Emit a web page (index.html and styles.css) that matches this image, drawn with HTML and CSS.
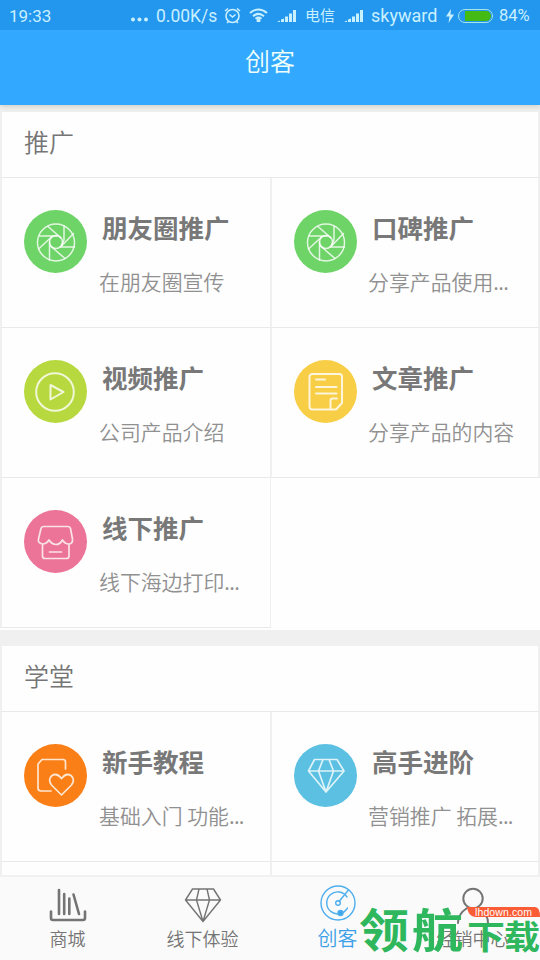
FILE: index.html
```html
<!DOCTYPE html>
<html lang="zh-CN">
<head>
<meta charset="utf-8">
<title>创客</title>
<link rel="stylesheet" href="styles.css">
</head>
<body>
<svg class="defs" width="0" height="0">
  <symbol id="aperture" viewBox="0 0 63 63">
    <circle cx="32" cy="32.500" r="18.500"/><circle cx="32" cy="32" r="6.500"/>
    <path d="M24 16.500 36.500 27.500M40 16V30L37.500 35M49.500 23.500 37 36.500M50.500 37H36M41 48.500 26.500 36M25.500 50V32M14.500 39 28 26.500M15.500 26H33"/>
  </symbol>
  <symbol id="signal" viewBox="0 0 20 14">
    <path d="M0 13 3 11.500V13ZM4 13V10.500L7 9.500V13ZM8 13V7.500H11V13ZM12 13V4.500H15V13ZM16 13V1H19V13Z"/>
  </symbol>
</svg>
<div class="screen">
  <header class="status">
    <span class="time">19:33</span>
    <svg class="dots" viewBox="0 0 17 5"><circle cx="2" cy="2.500" r="2"/><circle cx="8.500" cy="2.500" r="2"/><circle cx="15" cy="2.500" r="2"/></svg>
    <span class="speed">0.00K/s</span>
    <svg class="alarm" viewBox="0 0 17 17"><circle cx="8.500" cy="9" r="6.500"/><path d="M5.500 7.500 8.500 10 11.500 7.500M1 4 4 1.500M16 4 13 1.500M3 16 4.500 14.500M14 16 12.500 14.500"/></svg>
    <svg class="wifi" viewBox="0 0 19 14"><path d="M1 5Q9.500-2 18 5M4 8.200Q9.500 3.500 15 8.200M6.500 10.800Q9.500 8.500 12.500 10.800"/><circle cx="9.500" cy="12.500" r="1"/></svg>
    <svg class="signal s1"><use href="#signal"/></svg>
    <span class="carrier">电信</span>
    <svg class="signal s2"><use href="#signal"/></svg>
    <span class="net">skyward</span>
    <svg class="bolt" viewBox="0 0 8 14"><path d="M5 0 0 7.500H3.500L2.500 14 8 5.500H4.500Z"/></svg>
    <span class="battery"><i></i></span>
    <span class="percent">84%</span>
  </header>
  <h1 class="title">创客</h1>
  <main>
    <section class="group">
      <h2>推广</h2>
      <div class="grid">
        <article class="cell"><svg class="badge green"><use href="#aperture"/></svg><div class="copy"><h3>朋友圈推广</h3><p>在朋友圈宣传</p></div></article>
        <article class="cell"><svg class="badge green"><use href="#aperture"/></svg><div class="copy"><h3>口碑推广</h3><p>分享产品使用<span class="more">...</span></p></div></article>
        <article class="cell"><svg class="badge lime" viewBox="0 0 63 63"><circle cx="31" cy="32" r="18.800"/><path d="M26.500 25V39.500L39.500 32Z"/></svg><div class="copy"><h3>视频推广</h3><p>公司产品介绍</p></div></article>
        <article class="cell"><svg class="badge yellow" viewBox="0 0 63 63"><path d="M18.500 14H45.500Q48 14 48 17V43L42 49.500H18.500Q15.500 49.500 15.500 46.500V17Q15.500 14 18.500 14ZM36.500 49V40.500Q36.500 38.500 38.500 38.500H43M22 19.500H31M22 27H42.500M22 33.500H42.500"/></svg><div class="copy"><h3>文章推广</h3><p>分享产品的内容</p></div></article>
        <article class="cell"><svg class="badge pink" viewBox="0 0 63 63"><path d="M20 16.500H43.500Q46 16.500 46.500 18.500L48.500 29Q49 34 44.500 34Q41 34 38.500 30Q36 34.500 32 34.500Q28 34.500 25 30Q22.500 34 18.500 34Q13.500 33 14.500 29L17 18.500Q17.500 16.500 20 16.500ZM18.500 34V46Q18.500 48.500 21 48.500H42.500Q45 48.500 45 46V34M25.500 42H37.500"/></svg><div class="copy"><h3>线下推广</h3><p>线下海边打印<span class="more">...</span></p></div></article>
      </div>
    </section>
    <section class="group">
      <h2>学堂</h2>
      <div class="grid">
        <article class="cell"><svg class="badge orange" viewBox="0 0 63 63"><path d="M27 47H17Q14 47 14 44V20L18 15.500H39Q41.500 15.500 41.500 18V25M37.500 51 27.500 41Q23.500 35.500 28 31.500Q33 28.500 37.500 34.500Q42 28.500 47 31.500Q51.500 35.500 47.500 41Z"/></svg><div class="copy"><h3>新手教程</h3><p>基础入门 功能<span class="more">...</span></p></div></article>
        <article class="cell"><svg class="badge blue" viewBox="0 0 63 63"><path d="M20.500 15.500H43L50 27 32 48 14.500 27ZM14.500 27H50M29 15.500 24.500 27 32 48 39.500 27 35 15.500"/></svg><div class="copy"><h3>高手进阶</h3><p>营销推广 拓展<span class="more">...</span></p></div></article>
        <article class="cell"></article>
        <article class="cell"></article>
      </div>
    </section>
  </main>
  <nav class="tabs">
    <a class="tab"><svg viewBox="0 0 38 38"><path class="heavy" d="M2 24.500V31Q2 33 4 33H34Q36 33 36 31V24.500M10 3V27M15.200 7V27M20.300 11.500V27M24.500 7.500 30 27"/></svg><span>商城</span></a>
    <a class="tab"><svg viewBox="0 0 38 38"><path d="M8.500 2H29.500L36.500 13 19 34.500 1.500 13ZM1.500 13H36.500M15 2 12.500 13 19 34.500 25.500 13 23 2"/></svg><span>线下体验</span></a>
    <a class="tab active"><svg viewBox="0 0 38 38"><circle cx="19" cy="16" r="17"/><path d="M28 10A11 11 0 1 0 28.500 21M21.500 26.300Q26 25 28.500 21M20 14.500 29.500 3"/><circle cx="19" cy="16" r="2.300"/><circle class="dot" cx="21.500" cy="26" r="2.500"/></svg><span>创客</span></a>
    <a class="tab"><svg viewBox="0 0 38 38"><circle class="person" cx="19" cy="11.500" r="9.700"/><path class="person" d="M4 36Q4 27 13 21M25 21Q34 27 34 36"/></svg><span>经销中心</span></a>
  </nav>
  <div class="watermark">
    <svg viewBox="0 0 180 57">
      <g class="mark"><text x="-1" y="44" textLength="50" lengthAdjust="spacingAndGlyphs">领</text><text x="52" y="44" textLength="51" lengthAdjust="spacingAndGlyphs">航</text><text class="small" x="107" y="46" textLength="38" lengthAdjust="spacingAndGlyphs">下</text><text class="small" x="144" y="46" textLength="36" lengthAdjust="spacingAndGlyphs">载</text></g>
      <path class="pill" d="M107 4H175Q180 4 180 14H115Q108 13 107 4Z"/>
      <text class="site" x="115" y="12.500" textLength="57">lhdown.com</text>
    </svg>
  </div>
</div>
</body>
</html>
```
FILE: styles.css
```css
* { box-sizing: border-box; }
body { margin: 0; font-family: "Noto Sans CJK SC", sans-serif; }
h1, h2, h3, p { margin: 0; font-weight: 350; white-space: nowrap; }
.defs { display: block; }
.screen { position: relative; display: flex; flex-direction: column; width: 540px; height: 960px; overflow: hidden; background: #f0f0f0; }
.status { position: relative; z-index: 1; flex: none; display: flex; align-items: center; height: 30px; padding: 2px 9px 0; background: #2396ee; color: #c9f0ff; font: 17px/28px Roboto, "Noto Sans CJK SC", sans-serif; }
.status svg { flex: none; fill: #c9f0ff; }
.time { width: 122px; }
.dots { width: 17px; height: 5px; margin-top: 6px; }
.speed { width: 61px; margin-left: 8px; font-size: 17.5px; }
.status .alarm, .status .wifi { fill: none; stroke: #c9f0ff; stroke-width: 1.6; }
.alarm { width: 17px; height: 17px; margin: -2px 0 0 7px; }
.status .wifi { width: 19px; height: 14px; margin: -3px 0 0 8px; stroke-width: 2; }
.wifi circle { fill: #c9f0ff; }
.signal { width: 20px; height: 14px; margin-right: -1px; }
.s1 { margin-left: 9px; }
.carrier { width: 30px; margin-left: 9px; font-size: 15px; }
.s2 { margin-left: 9px; }
.net { width: 66px; margin-left: 8px; font-size: 18px; }
.bolt { width: 8px; height: 14px; margin-left: 9px; }
.battery { flex: none; width: 35px; height: 14px; margin: -1px 0 0 4px; padding: 1px 1px 1px 6px; border: 1.5px solid #a6e4e8; border-radius: 7px; }
.battery i { display: block; height: 100%; border-radius: 0 5px 5px 0; background: #43bb14; }
.percent { margin-left: 6px; font-size: 16.5px; }
.title { position: relative; flex: none; height: 75px; background: #32a8ff; box-shadow: 0 1px 6px #c9c9bd; color: #effff9; font-size: 25px; font-weight: 350; line-height: 61px; text-align: center; }
main { flex: 1; min-height: 0; overflow: hidden; padding-top: 7px; }
.group { margin-bottom: 16px; padding-bottom: 2px; background: #fefefe; }
.group h2 { height: 66px; padding-left: 22px; border-left: 2px solid #f0f0f0; border-right: 2px solid #f0f0f0; border-bottom: 1px solid #e9e9e9; color: #757575; font-size: 25px; line-height: 59px; }
.grid { display: grid; grid-template-columns: 270px 270px; grid-auto-rows: 150px; }
.cell { position: relative; display: flex; align-items: flex-start; padding: 32px 0 0 22px; border-left: 2px solid #f0f0f0; border-bottom: 1px solid #e9e9e9; overflow: hidden; }
.cell:nth-child(even) { border-right: 2px solid #f0f0f0; }
.cell:last-child:nth-child(odd) { width: 271px; border-right: 1px solid #f0f0f0; }
.badge { flex: none; width: 63px; height: 63px; border-radius: 32px; fill: none; stroke: #fff; stroke-opacity: .8; stroke-width: 1.7; stroke-linecap: round; stroke-linejoin: round; }
.green { background: #6ed468; stroke-width: 1.5; }
.lime { background: #b7d83e; stroke-width: 2; }
.yellow { background: #f7ce46; stroke-width: 2; }
.pink { background: #ec7498; }
.orange { background: #fa7f17; }
.blue { background: #5bc0e2; }
.copy { padding-left: 12px; }
.copy h3 { padding-left: 3px; color: #787878; font-size: 25.5px; font-weight: 700; line-height: 34px; }
.copy p { margin-top: 20px; color: #909090; font-size: 20.9px; line-height: 34px; }
.more { letter-spacing: -.7px; }
.cell:nth-child(even) p { margin-left: -1px; }
.tabs { position: relative; flex: none; display: flex; height: 85px; border-top: 2px solid #f1f1f1; background: #fafafa; color: #747474; }
.tab { display: flex; flex-direction: column; align-items: center; width: 135px; padding-top: 10px; font-size: 18px; font-weight: 350; line-height: 26px; }
.tab svg { width: 38px; height: 38px; fill: none; stroke: #747474; stroke-width: 1.4; stroke-linejoin: round; stroke-linecap: round; overflow: visible; }
.tab .heavy { stroke-width: 2.6; }
.tab .person { stroke-width: 2; }
.active { color: #3ca0e8; font-size: 20px; }
.tab.active svg { stroke: #4eaeee; }
.active .dot { fill: #3ca5eb; }
.watermark { position: absolute; left: 360px; top: 903px; width: 180px; height: 57px; }
.watermark svg { display: block; width: 180px; height: 57px; }
.mark { fill: #2fb75e; font-size: 46px; font-weight: 700; }
.mark .small { font-size: 33px; }
.pill { fill: #fa5c35; }
.site { fill: #fff; font: 10.5px "Liberation Sans", sans-serif; }
```
